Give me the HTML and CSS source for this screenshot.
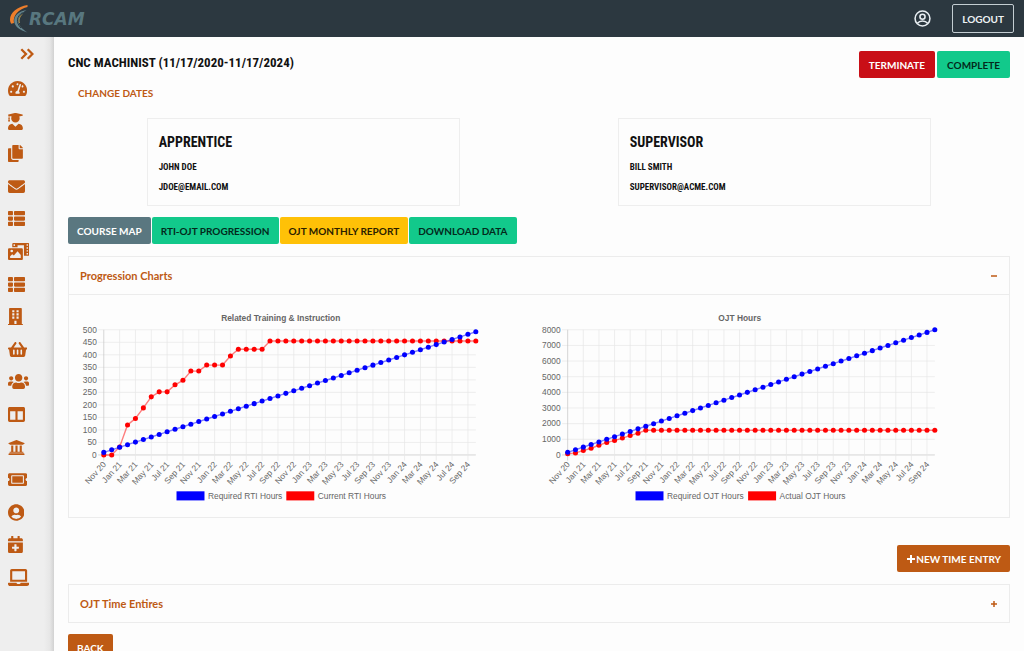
FILE: index.html
```
<!DOCTYPE html>
<html lang="en">
<head>
<meta charset="utf-8">
<meta name="viewport" content="width=device-width, initial-scale=1">
<title>CNC Machinist - RCAM</title>
<link rel="stylesheet" href="styles.css">
</head>
<body>
<header class="topbar">
  <a class="logo" href="#" aria-label="RCAM home">
    <svg class="logo-mark" viewBox="0 0 20 28" aria-hidden="true">
      <path fill="#ee7e2b" d="M18.500 0C8.500 1.500 1 7.500 1 14.500c0 1.500.5 3 1.200 4.200L5 18C3.500 11 9 4.500 18.500 2z"/>
      <path fill="#64868f" d="M17.500 5C9.500 6.500 5 10.500 5.200 16c.3 5.500 5.500 9.200 13.300 11.500C13 24 9.500 20.500 9.500 16c0-4 2.500-7.500 8-11z"/>
      <path fill="none" stroke="#2b3840" d="M13.500 7.500c-6 4-7 10-1.500 15.500"/>
      <path fill="none" stroke="#b99746" d="M13 9.500c-3 3-3.500 6-2.500 8.500"/>
    </svg>
    <span class="logo-text">RCAM</span>
  </a>
  <div class="topbar-actions">
    <button class="profile" type="button" aria-label="Profile">
      <svg viewBox="0 0 24 24" aria-hidden="true"><g fill="none" stroke="currentColor" stroke-width="2.200"><circle cx="12" cy="12" r="10.500"/><circle cx="12" cy="9.500" r="3.600"/><path d="M4.800 18.800c3.500-4.400 10.900-4.400 14.400 0"/></g></svg>
    </button>
    <button class="logout" type="button">LOGOUT</button>
  </div>
</header>
<div class="shell">
  <aside class="sidebar">
    <button class="expand" type="button" aria-label="Expand menu">
      <svg viewBox="0 0 14 12" aria-hidden="true"><path fill="none" stroke="currentColor" stroke-width="2.300" d="M1.300 1.300 6 6l-4.700 4.700M7.700 1.300 12.400 6l-4.700 4.700"/></svg>
    </button>
    <nav class="side-nav" aria-label="Main">
      <a href="#" aria-label="Dashboard"><svg viewBox="0 0 576 512"><path d="M288 32C128.940 32 0 160.940 0 320c0 52.800 14.250 102.260 39.060 144.800 5.610 9.620 16.300 15.200 27.440 15.200h443c11.140 0 21.830-5.580 27.440-15.200C561.750 422.260 576 372.800 576 320c0-159.060-128.940-288-288-288zm0 64c14.710 0 26.580 10.130 30.320 23.650-1.110 2.260-2.640 4.230-3.450 6.670l-9.220 27.670c-5.130 3.490-10.970 6.010-17.640 6.010-17.670 0-32-14.330-32-32S270.330 96 288 96zM96 384c-17.670 0-32-14.330-32-32s14.330-32 32-32 32 14.330 32 32-14.330 32-32 32zm48-160c-17.670 0-32-14.330-32-32s14.330-32 32-32 32 14.330 32 32-14.330 32-32 32zm246.770-72.410l-61.330 184C343.130 347.330 352 364.540 352 384c0 11.720-3.380 22.550-8.880 32H232.880c-5.500-9.450-8.880-20.280-8.880-32 0-33.940 26.500-61.430 59.900-63.590l61.340-184.010c4.170-12.560 17.730-19.450 30.360-15.170 12.570 4.190 19.350 17.790 15.170 30.360zm14.660 57.200l15.520-46.550c3.470-1.290 7.130-2.230 11.050-2.230 17.670 0 32 14.330 32 32s-14.330 32-32 32c-11.380-.01-20.890-6.280-26.570-15.220zM480 384c-17.670 0-32-14.330-32-32s14.330-32 32-32 32 14.330 32 32-14.330 32-32 32z"/></svg></a>
      <a href="#" aria-label="Apprentices"><svg viewBox="0 0 448 512"><path d="M319.400 320.600L224 416l-95.400-95.400C57.100 323.700 0 382.200 0 454.400v9.600c0 26.500 21.500 48 48 48h352c26.500 0 48-21.500 48-48v-9.600c0-72.200-57.100-130.700-128.600-133.800zM13.600 79.800l6.400 1.500v58.400c-7 4.200-12 11.500-12 20.300 0 8.400 4.600 15.400 11.100 19.700L3.500 242c-1.700 6.900 2.100 14 7.600 14h41.800c5.500 0 9.300-7.100 7.600-14l-15.600-62.300C51.400 175.400 56 168.400 56 160c0-8.800-5-16.100-12-20.300V87.100l66 15.900c-8.600 17.200-14 36.400-14 57 0 70.700 57.300 128 128 128s128-57.300 128-128c0-20.600-5.300-39.800-14-57l96.300-23.200c18.200-4.400 18.200-27.100 0-31.500l-190.400-46c-13-3.100-26.700-3.100-39.700 0L13.600 48.200c-18.100 4.400-18.100 27.200 0 31.600z"/></svg></a>
      <a href="#" aria-label="Documents"><svg viewBox="0 0 448 512"><path d="M320 448v40c0 13.255-10.745 24-24 24H24c-13.255 0-24-10.745-24-24V120c0-13.255 10.745-24 24-24h72v296c0 30.879 25.121 56 56 56h168zm0-344V0H152c-13.255 0-24 10.745-24 24v368c0 13.255 10.745 24 24 24h272c13.255 0 24-10.745 24-24V128H344c-13.200 0-24-10.800-24-24zm120.971-31.029L375.029 7.029A24 24 0 0 0 358.059 0H352v96h96v-6.059a24 24 0 0 0-7.029-16.970z"/></svg></a>
      <a href="#" aria-label="Messages"><svg viewBox="0 0 512 512"><path d="M502.300 190.800c3.900-3.100 9.700-.2 9.700 4.700V400c0 26.500-21.500 48-48 48H48c-26.500 0-48-21.500-48-48V195.600c0-5 5.700-7.800 9.700-4.700 22.400 17.400 52.100 39.500 154.100 113.600 21.100 15.400 56.700 47.800 92.200 47.600 35.700.3 72-32.800 92.300-47.600 102-74.100 131.600-96.300 154-113.700zM256 320c23.200.4 56.600-29.200 73.400-41.400 132.700-96.300 142.800-104.700 173.400-128.700 5.800-4.500 9.200-11.500 9.200-18.900v-19c0-26.500-21.500-48-48-48H48c-26.500 0-48 21.500-48 48v19c0 7.400 3.400 14.300 9.200 18.900 30.600 23.900 40.700 32.400 173.400 128.700 16.800 12.200 50.200 41.800 73.400 41.400z"/></svg></a>
      <a href="#" aria-label="Courses"><svg viewBox="0 0 512 512"><path id="list-icon" d="M149.333 216v80c0 13.255-10.745 24-24 24H24c-13.255 0-24-10.745-24-24v-80c0-13.255 10.745-24 24-24h101.333c13.255 0 24 10.745 24 24zM0 376v80c0 13.255 10.745 24 24 24h101.333c13.255 0 24-10.745 24-24v-80c0-13.255-10.745-24-24-24H24c-13.255 0-24 10.745-24 24zM125.333 32H24C10.745 32 0 42.745 0 56v80c0 13.255 10.745 24 24 24h101.333c13.255 0 24-10.745 24-24V56c0-13.255-10.745-24-24-24zm80 448H488c13.255 0 24-10.745 24-24v-80c0-13.255-10.745-24-24-24H205.333c-13.255 0-24 10.745-24 24v80c0 13.255 10.745 24 24 24zm-24-424v80c0 13.255 10.745 24 24 24H488c13.255 0 24-10.745 24-24V56c0-13.255-10.745-24-24-24H205.333c-13.255 0-24 10.745-24 24zm24 264H488c13.255 0 24-10.745 24-24v-80c0-13.255-10.745-24-24-24H205.333c-13.255 0-24 10.745-24 24v80c0 13.255 10.745 24 24 24z"/></svg></a>
      <a href="#" aria-label="Media"><svg viewBox="0 0 640 512"><path fill-rule="evenodd" d="M608 0H160a32 32 0 0 0-32 32v96h160V64h192v320h128a32 32 0 0 0 32-32V32a32 32 0 0 0-32-32zM168 35h40v58h-40zM560 40h42v42h-42zm0 88h42v42h-42zm0 88h42v42h-42zm0 88h42v42h-42zM32 160h384a32 32 0 0 1 32 32v288a32 32 0 0 1-32 32H32a32 32 0 0 1-32-32V192a32 32 0 0 1 32-32zm80 40a40 40 0 1 0 0 80 40 40 0 0 0 0-80zM64 448h320v-88L288 248 176 376l-48-40-64 64z"/></svg></a>
      <a href="#" aria-label="Programs"><svg viewBox="0 0 512 512"><use href="#list-icon"/></svg></a>
      <a href="#" aria-label="Companies"><svg viewBox="0 0 448 512"><path fill-rule="evenodd" d="M436 480h-20V24c0-13.255-10.745-24-24-24H56C42.745 0 32 10.745 32 24v456H12c-6.627 0-12 5.373-12 12v20h448v-20c0-6.627-5.373-12-12-12zM128 64h64v64h-64zm128 0h64v64h-64zM128 160h64v64h-64zm128 0h64v64h-64zM128 256h64v64h-64zm128 0h64v64h-64zM192 384h64v96h-64z"/></svg></a>
      <a href="#" aria-label="Store"><svg viewBox="0 0 576 512"><path d="M576 216v16c0 13.255-10.745 24-24 24h-8l-26.113 182.788C514.509 462.435 494.257 480 470.370 480H105.630c-23.887 0-44.139-17.565-47.518-41.212L32 256h-8c-13.255 0-24-10.745-24-24v-16c0-13.255 10.745-24 24-24h67.341l106.780-146.821c10.395-14.292 30.407-17.453 44.701-7.058 14.293 10.395 17.453 30.408 7.058 44.701L170.477 192h235.046L326.120 82.821c-10.395-14.292-7.234-34.306 7.059-44.701 14.291-10.395 34.306-7.235 44.701 7.058L484.659 192H552c13.255 0 24 10.745 24 24zM312 392V280c0-13.255-10.745-24-24-24s-24 10.745-24 24v112c0 13.255 10.745 24 24 24s24-10.745 24-24zm112 0V280c0-13.255-10.745-24-24-24s-24 10.745-24 24v112c0 13.255 10.745 24 24 24s24-10.745 24-24zm-224 0V280c0-13.255-10.745-24-24-24s-24 10.745-24 24v112c0 13.255 10.745 24 24 24s24-10.745 24-24z"/></svg></a>
      <a href="#" aria-label="Users"><svg viewBox="0 0 640 512"><path d="M96 224c35.300 0 64-28.700 64-64s-28.700-64-64-64-64 28.700-64 64 28.700 64 64 64zm448 0c35.300 0 64-28.700 64-64s-28.700-64-64-64-64 28.700-64 64 28.700 64 64 64zm32 32h-64c-17.600 0-33.500 7.100-45.100 18.600 40.300 22.100 68.900 62 75.100 109.400h66c17.700 0 32-14.300 32-32v-32c0-35.300-28.700-64-64-64zm-256 0c61.900 0 112-50.100 112-112S381.900 32 320 32 208 82.100 208 144s50.100 112 112 112zm76.800 32h-8.300c-20.800 10-43.900 16-68.500 16s-47.600-6-68.500-16h-8.300C179.600 288 128 339.600 128 403.200V432c0 26.500 21.500 48 48 48h288c26.500 0 48-21.500 48-48v-28.800c0-63.600-51.600-115.200-115.200-115.200zm-223.700-13.400C161.500 263.100 145.600 256 128 256H64c-35.300 0-64 28.700-64 64v32c0 17.700 14.300 32 32 32h65.900c6.300-47.400 34.900-87.300 75.200-109.400z"/></svg></a>
      <a href="#" aria-label="Boards"><svg viewBox="0 0 512 512"><path d="M464 32H48C21.490 32 0 53.490 0 80v352c0 26.510 21.490 48 48 48h416c26.510 0 48-21.490 48-48V80c0-26.510-21.490-48-48-48zM224 416H64V160h160v256zm224 0H288V160h160v256z"/></svg></a>
      <a href="#" aria-label="Institutions"><svg viewBox="0 0 512 512"><path d="M496 128v16a8 8 0 0 1-8 8h-24v12c0 6.627-5.373 12-12 12H60c-6.627 0-12-5.373-12-12v-12H24a8 8 0 0 1-8-8v-16a8 8 0 0 1 4.941-7.392l232-88a7.996 7.996 0 0 1 6.118 0l232 88A8 8 0 0 1 496 128zm-24 304H40c-13.255 0-24 10.745-24 24v16a8 8 0 0 0 8 8h464a8 8 0 0 0 8-8v-16c0-13.255-10.745-24-24-24zM96 192v192H60c-6.627 0-12 5.373-12 12v20h416v-20c0-6.627-5.373-12-12-12h-36V192h-64v192h-64V192h-64v192h-64V192H96z"/></svg></a>
      <a href="#" aria-label="Tickets"><svg viewBox="0 0 576 512"><path d="M128 160h320v192H128V160zm400 96c0 26.510 21.490 48 48 48v96c0 26.510-21.490 48-48 48H48c-26.510 0-48-21.490-48-48v-96c26.510 0 48-21.490 48-48s-21.490-48-48-48v-96c0-26.510 21.490-48 48-48h480c26.510 0 48 21.490 48 48v96c-26.510 0-48 21.490-48 48zm-48-104c0-13.255-10.745-24-24-24H120c-13.255 0-24 10.745-24 24v208c0 13.255 10.745 24 24 24h336c13.255 0 24-10.745 24-24V152z"/></svg></a>
      <a href="#" aria-label="Account"><svg viewBox="0 0 496 512"><path d="M248 8C111 8 0 119 0 256s111 248 248 248 248-111 248-248S385 8 248 8zm0 96c48.600 0 88 39.400 88 88s-39.400 88-88 88-88-39.400-88-88 39.400-88 88-88zm0 344c-58.700 0-111.300-26.600-146.500-68.200 18.800-35.400 55.600-59.800 98.500-59.800 2.400 0 4.800.4 7.100 1.100 13 4.200 26.600 6.900 40.900 6.900 14.300 0 28-2.700 40.900-6.900 2.300-.7 4.700-1.100 7.100-1.100 42.900 0 79.700 24.400 98.500 59.800C359.300 421.400 306.700 448 248 448z"/></svg></a>
      <a href="#" aria-label="Calendar"><svg viewBox="0 0 448 512"><path d="M436 160H12c-6.600 0-12-5.400-12-12v-36c0-26.500 21.500-48 48-48h48V12c0-6.600 5.400-12 12-12h40c6.600 0 12 5.400 12 12v52h128V12c0-6.600 5.400-12 12-12h40c6.600 0 12 5.400 12 12v52h48c26.500 0 48 21.500 48 48v36c0 6.600-5.400 12-12 12zM12 192h424c6.600 0 12 5.400 12 12v260c0 26.500-21.500 48-48 48H48c-26.500 0-48-21.500-48-48V204c0-6.600 5.400-12 12-12zm316 140c0-6.600-5.400-12-12-12h-60v-60c0-6.600-5.400-12-12-12h-40c-6.600 0-12 5.400-12 12v60h-60c-6.600 0-12 5.400-12 12v40c0 6.600 5.400 12 12 12h60v60c0 6.600 5.400 12 12 12h40c6.600 0 12-5.400 12-12v-60h60c6.600 0 12-5.400 12-12v-40z"/></svg></a>
      <a href="#" aria-label="Online learning"><svg viewBox="0 0 640 512"><path d="M624 416H381.540c-.74 19.810-14.710 32-32.740 32H288c-18.690 0-33.020-17.470-32.770-32H16c-8.800 0-16 7.200-16 16v16c0 35.200 28.800 64 64 64h512c35.200 0 64-28.800 64-64v-16c0-8.800-7.200-16-16-16zM576 48c0-26.400-21.600-48-48-48H112C85.600 0 64 21.600 64 48v336h512V48zm-64 272H128V64h384v256z"/></svg></a>
    </nav>
  </aside>
  <main class="content">
    <div class="title-row">
      <h1>CNC MACHINIST (11/17/2020-11/17/2024)</h1>
      <div class="button-group">
        <button class="btn btn-danger" type="button">TERMINATE</button>
        <button class="btn btn-success" type="button">COMPLETE</button>
      </div>
    </div>
    <a class="change-dates" href="#">CHANGE DATES</a>
    <div class="people">
      <section class="person">
        <h2>APPRENTICE</h2>
        <p>JOHN DOE</p>
        <p>JDOE@EMAIL.COM</p>
      </section>
      <section class="person">
        <h2>SUPERVISOR</h2>
        <p>BILL SMITH</p>
        <p>SUPERVISOR@ACME.COM</p>
      </section>
    </div>
    <div class="button-group">
      <button class="btn btn-slate" type="button">COURSE MAP</button>
      <button class="btn btn-success" type="button">RTI-OJT PROGRESSION</button>
      <button class="btn btn-warning" type="button">OJT MONTHLY REPORT</button>
      <button class="btn btn-success" type="button">DOWNLOAD DATA</button>
    </div>
    <section class="panel charts-panel">
      <button class="panel-toggle" type="button" aria-expanded="true"><span>Progression Charts</span><svg viewBox="0 0 8 8" aria-hidden="true"><path d="M1 4h6"/></svg></button>
      <div class="panel-body">
        <svg class="chart" id="rti-chart" viewBox="0 0 571 286" role="img" aria-label="Related Training &amp; Instruction"></svg>
        <svg class="chart" id="ojt-chart" viewBox="0 0 571 286" role="img" aria-label="OJT Hours"></svg>
      </div>
    </section>
    <div class="entry-actions">
      <button class="btn btn-primary" type="button"><svg viewBox="0 0 10 10" aria-hidden="true"><path d="M5 1v8M1 5h8"/></svg>NEW TIME ENTRY</button>
    </div>
    <section class="panel">
      <button class="panel-toggle" type="button" aria-expanded="false"><span>OJT Time Entires</span><svg viewBox="0 0 8 8" aria-hidden="true"><path d="M1 4h6M4 1v6"/></svg></button>
    </section>
    <div class="footer-actions"><button class="btn btn-primary" type="button">BACK</button></div>
  </main>
</div>
<script src="charts.js"></script>
</body>
</html>
```
FILE: styles.css
```
* { box-sizing: border-box; }

body {
  margin: 0;
  height: 100vh;
  display: flex;
  flex-direction: column;
  background: #fdfdfd;
  color: #111;
  font-family: Lato, "Liberation Sans", sans-serif;
  font-size: 11px;
}

button { font: inherit; margin: 0; cursor: pointer; }
a { text-decoration: none; }

.topbar {
  display: flex;
  flex: none;
  align-items: center;
  justify-content: space-between;
  padding: 4px 10px 4px 9px;
  background: #2c3840;
}

.logo { display: flex; align-items: center; color: #58777f; }
.logo-mark { width: 20px; height: 28px; }
.logo-text {
  font: italic bold 17px/20px "DejaVu Sans", sans-serif;
}

.topbar-actions { display: flex; align-items: center; gap: 21px; }
.profile {
  display: flex;
  padding: 0;
  border: 0;
  background: none;
  color: #e8eef2;
}
.profile svg { width: 17px; height: 17px; }
.logout {
  height: 29px;
  padding: 0 9px;
  border: 1px solid #c4cdd2;
  border-radius: 2px;
  background: none;
  color: #eef2f4;
  font-size: 10px;
  font-weight: 700;
}

.shell { display: flex; flex: 1; min-height: 0; }

.sidebar {
  display: flex;
  flex: none;
  flex-direction: column;
  width: 54px;
  padding: 11px 0 65px;
  background: linear-gradient(to right, #eee 44px, #e6e6e6 50px, #d2d2d2);
}
.expand {
  display: flex;
  justify-content: center;
  padding: 0;
  border: 0;
  background: none;
  color: #be5a14;
}
.expand svg { width: 14px; height: 12px; }
.side-nav {
  display: flex;
  flex: 1;
  flex-direction: column;
  justify-content: space-between;
  padding: 20px 0 0 8px;
}
.side-nav a { display: flex; }
.side-nav svg { height: 17px; fill: #be5a14; }

.content {
  flex: 1;
  min-width: 0;
  padding: 14px;
  overflow-y: auto;
  scrollbar-width: none;
}

.title-row { display: flex; justify-content: space-between; align-items: flex-start; }
h1, h2, .person p {
  margin: 0;
  font-family: "Roboto Condensed", "Liberation Sans Narrow", "Liberation Sans", sans-serif;
  font-weight: 700;
}
h1 { font-size: 13px; line-height: 24px; }

.button-group { display: flex; gap: 1px; }
.title-row .button-group { gap: 2px; }
.btn {
  display: flex;
  align-items: center;
  justify-content: center;
  height: 27px;
  padding: 0 8px;
  border: 1px solid transparent;
  border-radius: 2px;
  color: #03291b;
  font-size: 10px;
  font-weight: 700;
  white-space: nowrap;
}
.title-row .btn { padding: 0 9px; }
.btn-danger { background: #c90f17; color: #fff; }
.btn-success { background: #12c98b; }
.btn-warning { background: #ffc107; color: #2a2000; }
.btn-slate { background: #5a7780; color: #fff; }
.btn-primary { background: #be5a14; color: #fff; }
.btn svg {
  width: 10px;
  height: 10px;
  fill: none;
  stroke: currentColor;
  stroke-width: 2;
}

.change-dates {
  display: inline-block;
  margin: 8px 0 0 10px;
  color: #be5a14;
  font-size: 10px;
  font-weight: 700;
  line-height: 14px;
}

.people {
  display: grid;
  grid-template-columns: 1fr 1fr;
  justify-items: center;
  margin: 18px 0 11px;
}
.person {
  width: 66.6%;
  padding: 12px 11px 8px;
  border: 1px solid #eee;
}
.person h2 { margin-bottom: 4px; font-size: 14px; line-height: 22px; }
.person p { font-size: 9px; line-height: 20px; }

.panel { border: 1px solid #ececec; }
.charts-panel { margin-top: 12px; }
.panel-toggle {
  display: flex;
  align-items: center;
  justify-content: space-between;
  width: 100%;
  height: 37px;
  padding: 0 11px;
  border: 0;
  background: none;
  color: #be5a14;
  font-weight: 700;
}
.panel-toggle svg { width: 8px; height: 8px; fill: none; stroke: currentColor; stroke-width: 1.5; }
.panel-body {
  display: grid;
  grid-template-columns: 1fr 1fr;
  padding: 11px;
  border-top: 1px solid #ececec;
}
.chart {
  display: block;
  width: 87%;
  font-family: "Liberation Sans", Arial, sans-serif;
  font-size: 12px;
}
.chart text { fill: #666; }
.chart-title { font-weight: 700; }
.grid-line { stroke: #e6e6e6; }
.axis-line { stroke: #c4c4c4; }
.series-line { fill: none; stroke-width: 2; opacity: 0.5; }

.entry-actions { display: flex; justify-content: flex-end; margin: 27px 0 12px; }
.footer-actions { display: flex; margin-top: 11px; }
```
FILE: charts.js
```
const MONTHS = ["Jan", "Feb", "Mar", "Apr", "May", "Jun", "Jul", "Aug", "Sep", "Oct", "Nov", "Dec"];
const COUNT = 48;
const TOP = 34;
const BOTTOM = 213;

function monthLabel(i) {
  const m = 10 + i;
  return MONTHS[m % 12] + " " + (20 + Math.floor(m / 12));
}

function padded(values) {
  return Array.from({ length: COUNT }, (_, i) => values[Math.min(i, values.length - 1)]);
}

function add(parent, name, attrs, text) {
  const el = document.createElementNS("http://www.w3.org/2000/svg", name);
  for (const key in attrs) el.setAttribute(key, attrs[key]);
  if (text) el.textContent = text;
  parent.appendChild(el);
}

function drawChart(id, opts) {
  const svg = document.getElementById(id);
  const right = 566;
  const x = i => opts.left + i * (right - opts.left) / (COUNT - 1);
  const y = v => BOTTOM - v * (BOTTOM - TOP) / opts.max;

  add(svg, "text", { class: "chart-title", x: 287, y: 21, "text-anchor": "middle" }, opts.title);
  for (let v = 0; v <= opts.max; v += opts.step) {
    add(svg, "line", { class: v ? "grid-line" : "axis-line", x1: opts.left - 8, x2: right, y1: y(v), y2: y(v) });
    add(svg, "text", { x: opts.left - 10, y: y(v) + 4, "text-anchor": "end" }, String(v));
  }
  for (let i = 0; i < COUNT; i += 2) {
    add(svg, "line", { class: i ? "grid-line" : "axis-line", x1: x(i), x2: x(i), y1: TOP, y2: BOTTOM + 8 });
    add(svg, "text", {
      transform: `translate(${x(i) + 4} ${BOTTOM + 14}) rotate(-48)`,
      "text-anchor": "end"
    }, monthLabel(i));
  }
  opts.series.slice().reverse().forEach(s => {
    add(svg, "polyline", { class: "series-line", stroke: s.color, points: s.values.map((v, i) => x(i) + "," + y(v)).join(" ") });
    s.values.forEach((v, i) => add(svg, "circle", { cx: x(i), cy: y(v), r: 3.6, fill: s.color }));
  });
  opts.series.forEach(s => {
    add(svg, "rect", { x: s.legendX, y: 265, width: 40, height: 13, fill: s.color });
    add(svg, "text", { x: s.legendX + 45, y: 276 }, s.name);
  });
}

const linear = step => Array.from({ length: COUNT }, (_, i) => step * (i + 1));

drawChart("rti-chart", {
  title: "Related Training & Instruction", left: 34, max: 500, step: 50,
  series: [
    { name: "Required RTI Hours", color: "#0000ff", legendX: 138, values: linear(10.25) },
    { name: "Current RTI Hours", color: "#ff0000", legendX: 295, values: padded([0, 0, 32, 120, 146, 188, 232, 252, 252, 280, 298, 335, 335, 359, 359, 359, 395, 422, 422, 422, 422, 455]) }
  ]
});

drawChart("ojt-chart", {
  title: "OJT Hours", left: 41, max: 8000, step: 1000,
  series: [
    { name: "Required OJT Hours", color: "#0000ff", legendX: 138, values: linear(8000 / COUNT) },
    { name: "Actual OJT Hours", color: "#ff0000", legendX: 299, values: padded([70, 130, 280, 430, 620, 800, 920, 1080, 1240, 1390, 1580]) }
  ]
});
```
